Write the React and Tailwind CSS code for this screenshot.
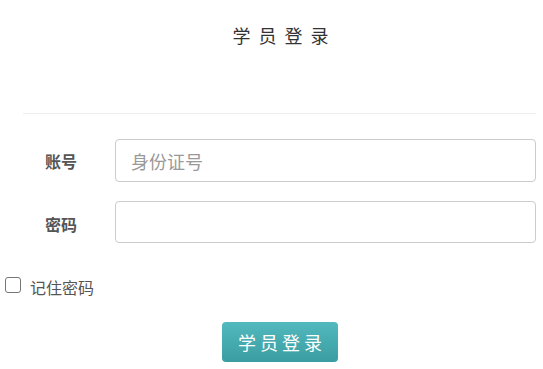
export default function App() {
  const font = { fontFamily: '"Noto Sans CJK SC", "Noto Sans", sans-serif' };
  return (
    <div className="w-[543px] h-[369px] bg-white overflow-hidden" style={font}>
      <div className="ml-[23px] mr-[7px]">
        <div className="pt-[22px] h-[113px] text-center text-[18px] leading-[26px] tracking-[8px] pl-[10px] text-[#333]">
          学员登录
        </div>
        <div className="border-t border-[#eeeeee]"></div>
      </div>
      <div className="mt-[25px] flex flex-col gap-[19px] mr-[7px]">
        <div className="flex items-center">
          <div className="w-[115px] pl-[45px] text-[16px] font-bold text-[#555]">账号</div>
          <input
            className="flex-1 h-[43px] border border-[#cccccc] rounded-[4px] px-[15px] text-[18px] text-[#555] placeholder:text-[#999] outline-none"
            placeholder="身份证号"
            style={font}
          />
        </div>
        <div className="flex items-center">
          <div className="w-[115px] pl-[45px] text-[16px] font-bold text-[#555] pt-[4px]">密码</div>
          <input
            type="password"
            className="flex-1 h-[42px] border border-[#cccccc] rounded-[4px] px-[15px] text-[18px] outline-none"
          />
        </div>
      </div>
      <div className="mt-[29px] flex items-center pl-[5px]">
        <span className="w-[16px] h-[16px] border border-[#767676] rounded-[3px] bg-white"></span>
        <span className="ml-[9px] mt-[5px] text-[16px] leading-[20px] text-[#555]">记住密码</span>
      </div>
      <div className="mt-[25px] flex justify-center pl-[17px]">
        <button
          className="w-[116px] h-[40px] rounded-[4px] bg-gradient-to-b from-[#52b9be] to-[#3a9da1] text-white text-[18px] tracking-[4px] pl-[4px]"
          style={font}
        >
          学员登录
        </button>
      </div>
    </div>
  );
}
